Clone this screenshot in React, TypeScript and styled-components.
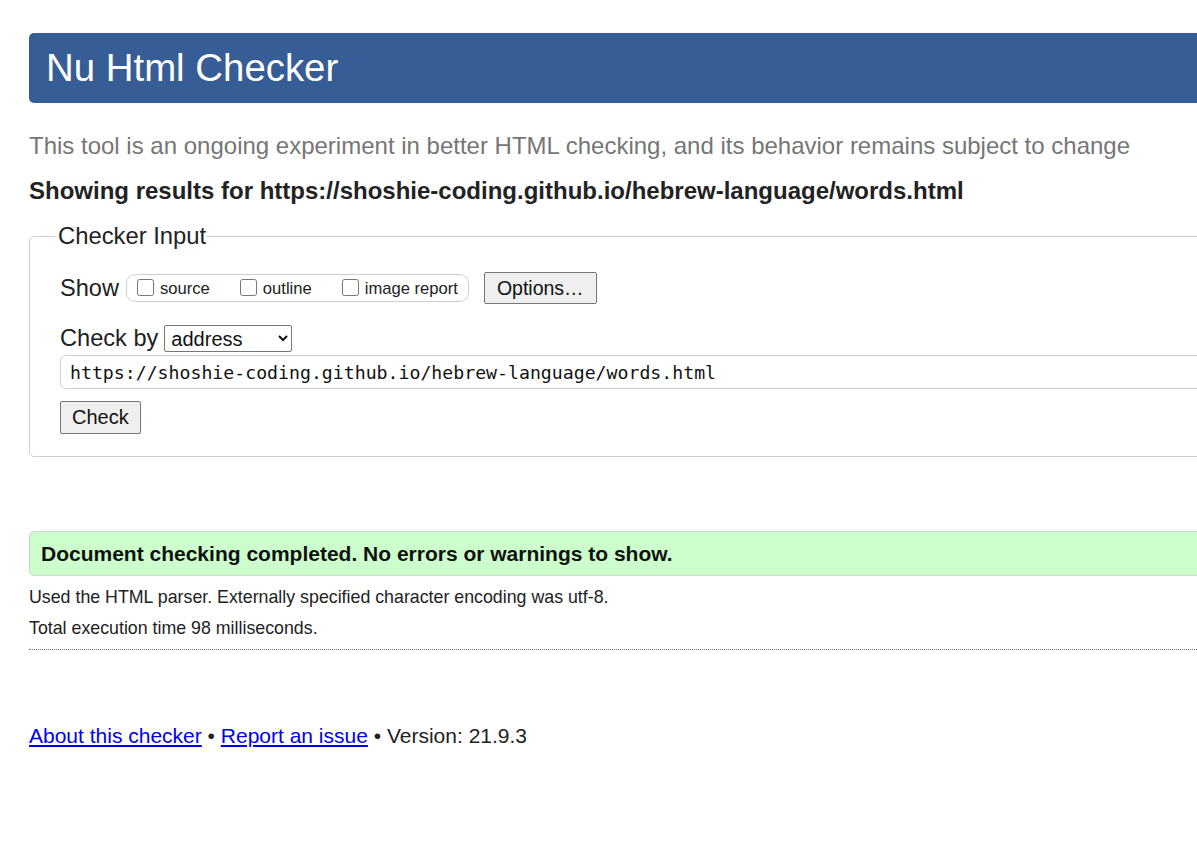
import React from "react";
import styled, { createGlobalStyle } from "styled-components";

const Global = createGlobalStyle`
  html, body { margin: 0; padding: 0; background: #fff; overflow: hidden; }
  body { font-family: "Liberation Sans", Arial, sans-serif; color: #222; }
`;

const Page = styled.div`
  width: 1500px;
  padding: 33px 0 0 29px;
`;

const Header = styled.h1`
  margin: 0;
  height: 70px;
  box-sizing: border-box;
  display: flex;
  align-items: center;
  padding-left: 17px;
  background: #365d95;
  color: #fff;
  font-size: 38.4px;
  font-weight: normal;
  border-radius: 5px;
`;

const Intro = styled.p`
  margin: 28px 0 0 0;
  font-size: 24px;
  color: #767676;
  line-height: 30px;
`;

const ResultsFor = styled.h2`
  margin: 16px 0 0 0;
  font-size: 24px;
  line-height: 28px;
  font-weight: bold;
  color: #222;
`;

const Fieldset = styled.fieldset`
  margin: 17px 0 0 0;
  padding: 22px 30px 22px 30px;
  border: 1px solid #cfcfcf;
  border-radius: 5px;
  min-width: 0;
`;

const Legend = styled.legend`
  padding: 0 1px;
  margin-left: -3px;
  font-size: 23.8px;
  color: #222;
`;

const Row = styled.div<{ $mt?: number }>`
  display: flex;
  align-items: center;
  margin-top: ${(p) => p.$mt ?? 0}px;
`;

const Label = styled.span<{ $mr: number }>`
  font-size: 23.6px;
  color: #222;
  margin-right: ${(p) => p.$mr}px;
`;

const OptionGroup = styled.div`
  display: flex;
  align-items: center;
  height: 28px;
  box-sizing: border-box;
  padding: 0 10px 0 10px;
  border: 1px solid #cfcfcf;
  border-radius: 9px;
  gap: 30px;
`;

const Opt = styled.label`
  display: flex;
  align-items: center;
  gap: 6px;
  font-size: 16.6px;
  color: #222;
  padding-top: 1px;
`;

const Check = styled.input`
  width: 17px;
  height: 17px;
  margin: -3px 0 0 0;
`;

const Btn = styled.button`
  font-family: "Liberation Sans", Arial, sans-serif;
  font-size: 19.5px;
  color: #111;
  background: #efefef;
  border: 1px solid #767676;
  border-radius: 2px;
  padding: 0 12px;
  height: 32px;
`;

const OptionsBtn = styled(Btn)`
  margin-left: 15px;
`;

const Select = styled.select`
  font-family: "Liberation Sans", Arial, sans-serif;
  font-size: 20px;
  color: #111;
  width: 128px;
  height: 27px;
  border: 1px solid #767676;
  border-radius: 2px;
  background: #fff;
  padding: 0 2px;
`;

const UrlInput = styled.input`
  display: block;
  box-sizing: border-box;
  width: 1400px;
  height: 34px;
  margin-top: 3px;
  padding: 0 9px;
  border: 1px solid #cfcfcf;
  border-radius: 6px;
  font-family: "DejaVu Sans Mono", "Liberation Mono", monospace;
  font-size: 18.2px;
  color: #111;
`;

const CheckBtn = styled(Btn)`
  margin-top: 12px;
  padding: 0 11px;
  height: 33px;
  font-size: 20px;
`;

const Success = styled.div`
  margin-top: 74px;
  height: 45px;
  box-sizing: border-box;
  display: flex;
  align-items: center;
  padding-left: 11px;
  background: #ccffcc;
  border: 1px solid #c8dcc8;
  border-radius: 5px;
  font-size: 21px;
  font-weight: bold;
  color: #111;
`;

const Info = styled.p<{ $mt: number }>`
  margin: ${(p) => p.$mt}px 0 0 0;
  font-size: 17.8px;
  line-height: 22px;
  color: #222;
`;

const Divider = styled.hr`
  margin: 10px 0 0 0;
  border: 0;
  border-top: 1px dotted #777;
  height: 0;
`;

const Footer = styled.p`
  margin: 74px 0 0 0;
  font-size: 21px;
  color: #222;
`;

const Link = styled.a`
  color: #0000ee;
  text-decoration: underline;
`;

export default function App() {
  return (
    <>
      <Global />
      <Page>
        <Header>Nu Html Checker</Header>
        <Intro>
          This tool is an ongoing experiment in better HTML checking, and its behavior remains subject to change
        </Intro>
        <ResultsFor>Showing results for https://shoshie-coding.github.io/hebrew-language/words.html</ResultsFor>
        <Fieldset>
          <Legend>Checker Input</Legend>
          <Row>
            <Label $mr={7}>Show</Label>
            <OptionGroup>
              <Opt>
                <Check type="checkbox" />
                source
              </Opt>
              <Opt>
                <Check type="checkbox" />
                outline
              </Opt>
              <Opt>
                <Check type="checkbox" />
                image report
              </Opt>
            </OptionGroup>
            <OptionsBtn>Options…</OptionsBtn>
          </Row>
          <Row $mt={21}>
            <Label $mr={6}>Check by</Label>
            <Select defaultValue="address">
              <option value="address">address</option>
              <option value="file">file upload</option>
              <option value="text">text input</option>
            </Select>
          </Row>
          <UrlInput defaultValue="https://shoshie-coding.github.io/hebrew-language/words.html" />
          <CheckBtn>Check</CheckBtn>
        </Fieldset>
        <Success>Document checking completed. No errors or warnings to show.</Success>
        <Info $mt={10}>Used the HTML parser. Externally specified character encoding was utf-8.</Info>
        <Info $mt={9}>Total execution time 98 milliseconds.</Info>
        <Divider />
        <Footer>
          <Link href="#">About this checker</Link> • <Link href="#">Report an issue</Link> • Version: 21.9.3
        </Footer>
      </Page>
    </>
  );
}
